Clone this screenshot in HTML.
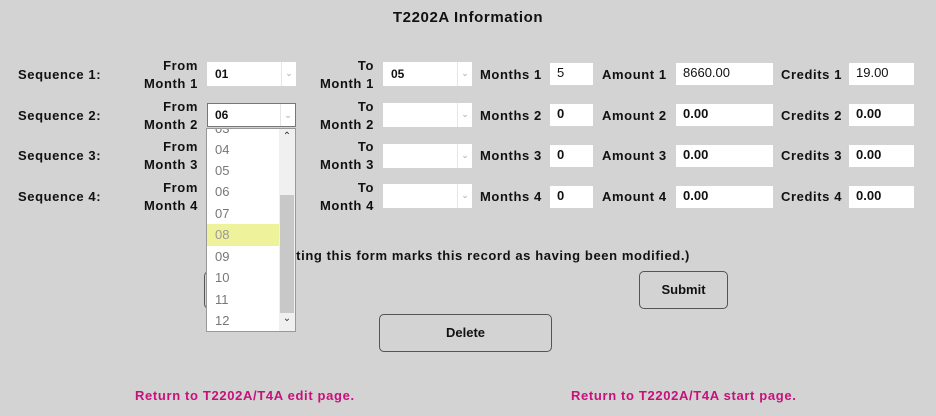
<!DOCTYPE html>
<html><head><style>
body{margin:0;width:936px;height:416px;background:#d3d3d3;font-family:"Liberation Sans",sans-serif;position:relative;overflow:hidden;color:#111}
.a{position:absolute;white-space:nowrap}
.b{font-weight:bold;font-size:13px;letter-spacing:0.6px}
.lbl2{font-weight:bold;font-size:13px;letter-spacing:0.6px;line-height:18px;text-align:right;position:absolute}
.sel{position:absolute;background:#fff;height:24px;font-weight:bold;font-size:12px;line-height:24px;box-sizing:border-box;padding-left:8px}
.sel .ar{position:absolute;right:0;top:0;width:14px;height:24px;border-left:1px solid #e6e6e6;color:#aaa;font-size:9px;text-align:center;line-height:22px;font-weight:normal}
.inp{position:absolute;background:#fff;height:22px;font-size:13px;font-weight:bold;line-height:20px;padding-left:7px;box-sizing:border-box}
.btn{position:absolute;border:1px solid #555;border-radius:5px;background:#d3d3d3;font-size:13px;font-weight:bold;text-align:center;box-sizing:border-box}
.lnk{position:absolute;color:#c8107a;font-weight:bold;font-size:13px;letter-spacing:0.65px}
.dd{position:absolute;left:206px;top:128px;width:90px;height:204px;background:#fff;border:1px solid #999;box-sizing:border-box;overflow:hidden}
.dd div.o{position:absolute;left:0;width:73px;height:21.5px;font-size:13px;color:#777;padding-left:8px;line-height:21px;box-sizing:border-box}
</style></head><body>
<div class="a b" style="left:0;width:936px;top:9px;text-align:center;font-size:15px">T2202A Information</div>

<div class="a b" style="left:18px;top:67px">Sequence 1:</div>
<div class="a b" style="left:18px;top:108px">Sequence 2:</div>
<div class="a b" style="left:18px;top:148px">Sequence 3:</div>
<div class="a b" style="left:18px;top:189px">Sequence 4:</div>

<div class="lbl2" style="left:110px;width:88px;top:57px">From<br>Month 1</div>
<div class="lbl2" style="left:110px;width:88px;top:98px">From<br>Month 2</div>
<div class="lbl2" style="left:110px;width:88px;top:138px">From<br>Month 3</div>
<div class="lbl2" style="left:110px;width:88px;top:179px">From<br>Month 4</div>

<div class="lbl2" style="left:290px;width:84px;top:57px">To<br>Month 1</div>
<div class="lbl2" style="left:290px;width:84px;top:98px">To<br>Month 2</div>
<div class="lbl2" style="left:290px;width:84px;top:138px">To<br>Month 3</div>
<div class="lbl2" style="left:290px;width:84px;top:179px">To<br>Month 4</div>

<div class="sel" style="left:207px;top:62px;width:89px">01<span class="ar">&#8964;</span></div>
<div class="sel" style="left:207px;top:103px;width:89px;border:1px solid #777;padding-left:7px;line-height:22px">06<span class="ar" style="height:22px">&#8964;</span></div>
<div class="sel" style="left:383px;top:62px;width:89px">05<span class="ar">&#8964;</span></div>
<div class="sel" style="left:383px;top:103px;width:89px"><span class="ar">&#8964;</span></div>
<div class="sel" style="left:383px;top:144px;width:89px"><span class="ar">&#8964;</span></div>
<div class="sel" style="left:383px;top:184px;width:89px"><span class="ar">&#8964;</span></div>

<div class="a b" style="left:480px;top:67px">Months 1</div>
<div class="a b" style="left:480px;top:108px">Months 2</div>
<div class="a b" style="left:480px;top:148px">Months 3</div>
<div class="a b" style="left:480px;top:189px">Months 4</div>
<div class="inp" style="left:550px;top:63px;width:43px;font-weight:normal">5</div>
<div class="inp" style="left:550px;top:104px;width:43px">0</div>
<div class="inp" style="left:550px;top:145px;width:43px">0</div>
<div class="inp" style="left:550px;top:186px;width:43px">0</div>

<div class="a b" style="left:602px;top:67px">Amount 1</div>
<div class="a b" style="left:602px;top:108px">Amount 2</div>
<div class="a b" style="left:602px;top:148px">Amount 3</div>
<div class="a b" style="left:602px;top:189px">Amount 4</div>
<div class="inp" style="left:676px;top:63px;width:97px;font-weight:normal">8660.00</div>
<div class="inp" style="left:676px;top:104px;width:97px">0.00</div>
<div class="inp" style="left:676px;top:145px;width:97px">0.00</div>
<div class="inp" style="left:676px;top:186px;width:97px">0.00</div>

<div class="a b" style="left:781px;top:67px">Credits 1</div>
<div class="a b" style="left:781px;top:108px">Credits 2</div>
<div class="a b" style="left:781px;top:148px">Credits 3</div>
<div class="a b" style="left:781px;top:189px">Credits 4</div>
<div class="inp" style="left:849px;top:63px;width:65px;font-weight:normal">19.00</div>
<div class="inp" style="left:849px;top:104px;width:65px">0.00</div>
<div class="inp" style="left:849px;top:145px;width:65px">0.00</div>
<div class="inp" style="left:849px;top:186px;width:65px">0.00</div>

<div class="a b" style="right:246px;top:248px">(Submitting this form marks this record as having been modified.)</div>

<div class="btn" style="left:204px;top:271px;width:89px;height:38px"></div>
<div class="btn" style="left:639px;top:271px;width:89px;height:38px;line-height:36px">Submit</div>
<div class="btn" style="left:379px;top:314px;width:173px;height:38px;line-height:36px">Delete</div>

<div class="lnk" style="left:135px;top:388px">Return to T2202A/T4A edit page.</div>
<div class="lnk" style="left:571px;top:388px">Return to T2202A/T4A start page.</div>

<div class="dd">
<div class="o" style="top:-11px">03</div>
<div class="o" style="top:10px">04</div>
<div class="o" style="top:31px">05</div>
<div class="o" style="top:52px">06</div>
<div class="o" style="top:74px">07</div>
<div class="o" style="top:95px;background:#eef29a;color:#999">08</div>
<div class="o" style="top:117px">09</div>
<div class="o" style="top:138px">10</div>
<div class="o" style="top:160px">11</div>
<div class="o" style="top:181px">12</div>
<div style="position:absolute;left:72px;top:0;width:16px;height:202px;background:#f0f0f0"></div>
<div style="position:absolute;left:73px;top:66px;width:14px;height:118px;background:#c8c8c8"></div>
<div style="position:absolute;left:72px;top:2px;width:16px;font-size:10px;text-align:center;color:#333">&#8963;</div>
<div style="position:absolute;left:72px;top:184px;width:16px;font-size:10px;text-align:center;color:#333">&#8964;</div>
</div>
</body></html>
